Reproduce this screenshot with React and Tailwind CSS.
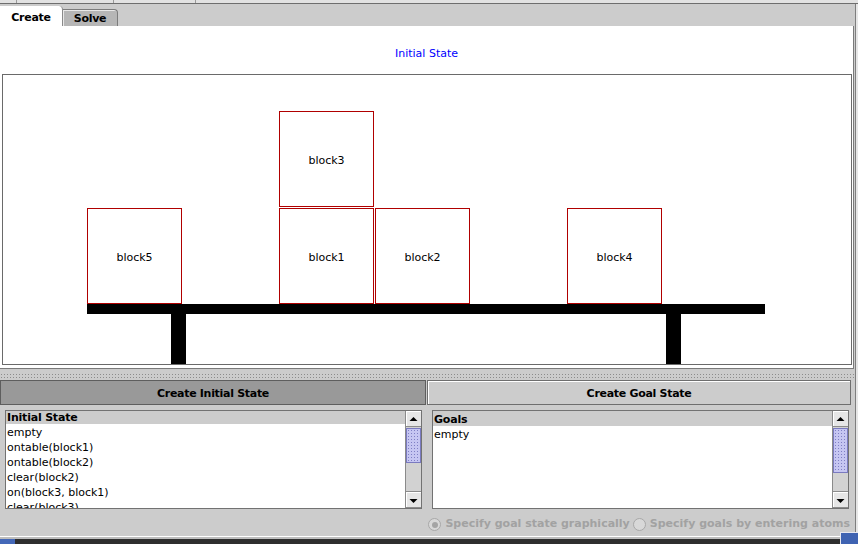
import React from "react";

function Block({ name, pos }) {
  return (
    <div
      className={`absolute ${pos} w-[95px] h-[96px] border border-[#b00000] bg-white flex items-center justify-center pt-[3px] text-[11px] leading-[14px] text-black`}
    >
      {name}
    </div>
  );
}

function Arrow({ up }) {
  return (
    <div className="h-[16px] bg-[#e6e6e6] shadow-[inset_1px_1px_0_#ffffff] border-b border-[#8c8c8c] flex items-center justify-center">
      <svg width="15" height="16" viewBox="0 0 15 16">
        {up ? (
          <polygon points="3.5,10 11.5,10 7.5,6" fill="#000" />
        ) : (
          <polygon points="3.5,7 11.5,7 7.5,11" fill="#000" />
        )}
      </svg>
    </div>
  );
}

function ScrollBar({ thumb }) {
  return (
    <div className="w-[16px] h-full border-l border-[#8a8a8a] bg-[#d2d2d2] flex flex-col">
      <Arrow up />
      <div
        className={`${thumb} mt-[1px] bg-[#c6c6f2] border border-[#7a7ac0] bg-[radial-gradient(circle,#7f7fc4_0.6px,transparent_0.9px)] bg-[length:3px_3px]`}
      />
      <div className="flex-1" />
      <div className="border-t border-[#8c8c8c]">
        <Arrow />
      </div>
    </div>
  );
}

function Row({ children, header }) {
  return (
    <div
      className={
        header
          ? "h-[15px] leading-[15px] pt-[1px] pl-[1px] bg-[#cccccc] font-bold text-[11px] tracking-[-0.2px] whitespace-nowrap"
          : "h-[15px] leading-[15px] pt-[1px] pl-[1px] text-[11px] whitespace-nowrap"
      }
    >
      {children}
    </div>
  );
}

function Radio({ checked }) {
  return (
    <div className="w-[13px] h-[13px] rounded-full border border-[#a8a8a8] bg-[#d8d8d8] flex items-center justify-center shrink-0">
      {checked ? <div className="w-[6px] h-[6px] rounded-full bg-[#a4a4a4]" /> : null}
    </div>
  );
}

export default function App() {
  return (
    <div className="relative w-[858px] h-[544px] bg-[#cccccc] overflow-hidden flex flex-col font-['DejaVu_Sans',sans-serif] text-black">
      {/* top strip */}
      <div className="h-[4px] flex border-b border-[#6e6e6e] bg-[#e2e2e2]">
        <div className="w-[16px]" />
        <div className="w-px bg-[#9a9a9a]" />
        <div className="w-[96px]" />
        <div className="w-px bg-[#9a9a9a]" />
        <div className="w-[81px]" />
        <div className="w-px bg-[#9a9a9a]" />
      </div>

      <div className="flex flex-1">
        {/* main column */}
        <div className="w-[855px] flex flex-col">
          {/* tabs */}
          <div className="h-[22px] flex items-end">
            <div className="w-[63px] h-[20px] bg-white border-r border-[#8a8a8a] rounded-tr-[4px] flex items-center justify-center text-[11px] font-bold tracking-[-0.3px] pt-[4px]">
              Create
            </div>
            <div className="w-[55px] h-[17px] bg-[#b6b6b6] border-t border-r border-[#7c7c7c] shadow-[inset_1px_1px_0_#e8e8e8] rounded-tr-[4px] flex items-center justify-center text-[11px] font-bold tracking-[-0.3px] pt-[3px]">
              Solve
            </div>
          </div>

          {/* white panel */}
          <div className="w-[854px] h-[343px] bg-white border-r border-b border-[#7a7a7a] flex flex-col">
            <div className="h-[48px] pt-[21px] text-center text-[11px] leading-[14px] text-[#0000ff]">
              Initial State
            </div>
            <div className="relative ml-[2px] w-[850px] h-[291px] border border-[#6a6a6a] bg-white">
              <Block name="block3" pos="left-[276px] top-[36px]" />
              <Block name="block5" pos="left-[84px] top-[133px]" />
              <Block name="block1" pos="left-[276px] top-[133px]" />
              <Block name="block2" pos="left-[372px] top-[133px]" />
              <Block name="block4" pos="left-[564px] top-[133px]" />
              <div className="absolute left-[84px] top-[229px] w-[678px] h-[10px] bg-black" />
              <div className="absolute left-[168px] top-[239px] w-[15px] h-[50px] bg-black" />
              <div className="absolute left-[663px] top-[239px] w-[15px] h-[50px] bg-black" />
            </div>
          </div>

          {/* splitter */}
          <div className="h-[11px] pt-[4px]">
            <div className="h-[5px] bg-[radial-gradient(circle,#8c8c8c_0.6px,transparent_0.9px)] bg-[length:3px_3px]" />
          </div>

          {/* buttons */}
          <div className="h-[25px] flex">
            <div className="w-[426px] h-full bg-[#999999] border border-[#5e5e5e] flex items-center justify-center pt-[3px] text-[11px] font-bold tracking-[-0.3px]">
              Create Initial State
            </div>
            <div className="ml-[1px] w-[424px] h-full bg-[#cccccc] border border-[#6e6e6e] shadow-[inset_1px_1px_0_#ffffff] flex items-center justify-center pt-[3px] text-[11px] font-bold tracking-[-0.3px]">
              Create Goal State
            </div>
          </div>

          <div className="h-[5px]" />

          {/* lists */}
          <div className="h-[99px] flex">
            <div className="w-[427px]">
              <div className="ml-[5px] w-[417px] h-[99px] border border-[#727272] bg-white flex">
                <div className="flex-1 overflow-hidden">
                  <div className="-mt-[2px]">
                    <Row header>Initial State</Row>
                    <Row>empty</Row>
                    <Row>ontable(block1)</Row>
                    <Row>ontable(block2)</Row>
                    <Row>clear(block2)</Row>
                    <Row>on(block3, block1)</Row>
                    <Row>clear(block3)</Row>
                  </div>
                </div>
                <ScrollBar thumb="h-[35px]" />
              </div>
            </div>
            <div className="w-[427px]">
              <div className="ml-[5px] w-[417px] h-[99px] border border-[#727272] bg-white flex">
                <div className="flex-1 overflow-hidden">
                  <Row header>Goals</Row>
                  <Row>empty</Row>
                </div>
                <ScrollBar thumb="h-[45px]" />
              </div>
            </div>
          </div>

          {/* radio row */}
          <div className="h-[27px] flex items-center justify-end pr-[5px] pt-[4px] text-[11px] font-bold text-[#a2a2a2] whitespace-nowrap">
            <Radio checked />
            <span className="ml-[4px]">Specify goal state graphically</span>
            <div className="ml-[3px]">
              <Radio />
            </div>
            <span className="ml-[4px]">Specify goals by entering atoms</span>
          </div>
        </div>
        <div className="w-px bg-[#7e7e7e]" />
        <div className="w-[2px] bg-[#e6e6e6]" />
      </div>

      {/* bottom strip */}
      <div className="h-[8px] flex flex-col">
        <div className="h-px bg-white" />
        <div className="h-[2px] bg-[#bdbdbd]" />
        <div className="flex-1 bg-[#2e2e2e] flex justify-between">
          <div className="w-[15px] bg-[#4468b8]" />
        </div>
      </div>
      <div className="absolute right-0 bottom-0 w-[18px] h-[12px] bg-[#3f63b2] border-t border-l border-[#e8e8f0]" />
    </div>
  );
}
